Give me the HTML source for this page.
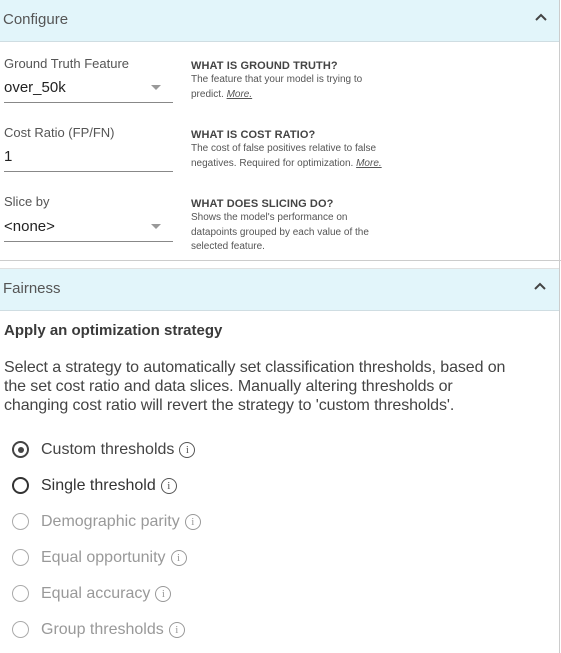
<!DOCTYPE html>
<html><head><style>
*{margin:0;padding:0;box-sizing:border-box}
body{width:561px;height:653px;background:#fff;font-family:"Liberation Sans",sans-serif;position:relative;overflow:hidden;color:#333}
.a{position:absolute;white-space:nowrap}
.hdr{position:absolute;left:0;width:559px;background:#e2f5fa;border-bottom:1px solid #cfdde2}
.lbl{font-size:13px;color:#555}
.val{font-size:15px;color:#222}
.line{position:absolute;left:4px;width:169px;height:1px;background:#888}
.t{font-size:11px;color:#444;font-weight:bold;letter-spacing:0.1px}
.b{font-size:10px;color:#555}
.r{position:absolute;left:12px;width:17px;height:17px;border-radius:50%;border:1.5px solid #aaa}
.rt{font-size:16px;color:#999}
.i{display:inline-block;width:16px;height:16px;border-radius:50%;border:1.3px solid #999;font-size:11px;text-align:center;line-height:14px;vertical-align:1px;margin-left:5px;font-family:"Liberation Serif",serif}
</style></head><body>
<div style="position:absolute;left:559px;top:0;width:1px;height:653px;background:#ccc"></div>
<div class="hdr" style="top:0;height:42px"></div>
<div class="a" style="left:3px;top:11px;font-size:15px;color:#555">Configure</div>
<svg class="a" style="left:535px;top:13px" width="12" height="10"><path d="M1 7 L6 2 L11 7" fill="none" stroke="#444" stroke-width="2"/></svg>

<div class="a lbl" style="left:4px;top:56px">Ground Truth Feature</div>
<div class="a val" style="left:4px;top:79px">over_50k</div>
<svg class="a" style="left:151px;top:85px" width="10" height="6"><path d="M0 0 L10 0 L5 5Z" fill="#999"/></svg>
<div class="line" style="top:102px"></div>
<div class="a t" style="left:191px;top:60px">WHAT IS GROUND TRUTH?</div>
<div class="a b" style="left:191px;top:74px">The feature that your model is trying to</div>
<div class="a b" style="left:191px;top:89px">predict. <u><i>More.</i></u></div>

<div class="a lbl" style="left:4px;top:125px">Cost Ratio (FP/FN)</div>
<div class="a val" style="left:4px;top:148px">1</div>
<div class="line" style="top:171px"></div>
<div class="a t" style="left:191px;top:129px">WHAT IS COST RATIO?</div>
<div class="a b" style="left:191px;top:143px">The cost of false positives relative to false</div>
<div class="a b" style="left:191px;top:158px">negatives. Required for optimization. <u><i>More.</i></u></div>

<div class="a lbl" style="left:4px;top:194px">Slice by</div>
<div class="a val" style="left:4px;top:218px">&lt;none&gt;</div>
<svg class="a" style="left:151px;top:224px" width="10" height="6"><path d="M0 0 L10 0 L5 5Z" fill="#999"/></svg>
<div class="line" style="top:241px"></div>
<div class="a t" style="left:191px;top:198px">WHAT DOES SLICING DO?</div>
<div class="a b" style="left:191px;top:212px">Shows the model's performance on</div>
<div class="a b" style="left:191px;top:227px">datapoints grouped by each value of the</div>
<div class="a b" style="left:191px;top:241px">selected feature.</div>

<div style="position:absolute;left:0;top:260px;width:561px;height:1px;background:#ccc"></div>
<div class="hdr" style="top:268px;height:43px;border-top:1px solid #e0e0e0"></div>
<div class="a" style="left:3px;top:280px;font-size:15px;color:#555">Fairness</div>
<svg class="a" style="left:534px;top:282px" width="12" height="10"><path d="M1 7 L6 2 L11 7" fill="none" stroke="#444" stroke-width="2"/></svg>

<div class="a" style="left:4px;top:322px;font-size:15px;font-weight:bold;color:#3a3a3a">Apply an optimization strategy</div>
<div class="a" style="left:4px;top:358px;font-size:16px;line-height:19px;color:#444;letter-spacing:-0.1px">Select a strategy to automatically set classification thresholds, based on<br>the set cost ratio and data slices. Manually altering thresholds or<br>changing cost ratio will revert the strategy to 'custom thresholds'.</div>

<div class="r" style="top:441px;border:2px solid #444"><div style="position:absolute;left:3.5px;top:3.5px;width:6px;height:6px;border-radius:50%;background:#444"></div></div>
<div class="a rt" style="left:41px;top:441px;color:#444">Custom thresholds<span class="i" style="border-color:#555;color:#555">i</span></div>
<div class="r" style="top:477px;border:2px solid #333"></div>
<div class="a rt" style="left:41px;top:477px;color:#333">Single threshold<span class="i" style="border-color:#555;color:#555">i</span></div>
<div class="r" style="top:513px"></div>
<div class="a rt" style="left:41px;top:513px">Demographic parity<span class="i">i</span></div>
<div class="r" style="top:549px"></div>
<div class="a rt" style="left:41px;top:549px">Equal opportunity<span class="i">i</span></div>
<div class="r" style="top:585px"></div>
<div class="a rt" style="left:41px;top:585px">Equal accuracy<span class="i">i</span></div>
<div class="r" style="top:621px"></div>
<div class="a rt" style="left:41px;top:621px">Group thresholds<span class="i">i</span></div>
</body></html>
